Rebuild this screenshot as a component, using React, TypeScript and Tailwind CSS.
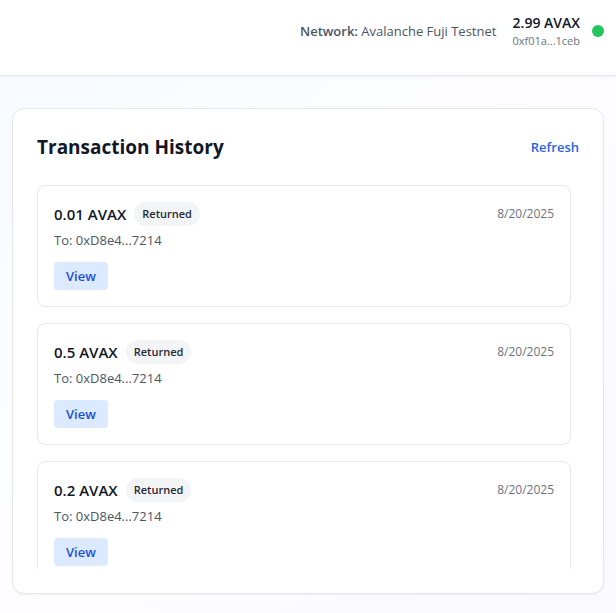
type Transaction = {
  id: number;
  amount: string;
  status: string;
  recipient: string;
  date: string;
};

const transactions: Transaction[] = [
  { id: 1, amount: "0.01 AVAX", status: "Returned", recipient: "0xD8e4...7214", date: "8/20/2025" },
  { id: 2, amount: "0.5 AVAX", status: "Returned", recipient: "0xD8e4...7214", date: "8/20/2025" },
  { id: 3, amount: "0.2 AVAX", status: "Returned", recipient: "0xD8e4...7214", date: "8/20/2025" },
];

function Header() {
  return (
    <header className="flex items-center justify-end gap-4 border-b border-[#e5e7eb] bg-white px-3 pt-[13px] pb-[26px] shadow-xs">
      <p className="text-[13px] leading-5 text-[#4b5563]">
        <span className="font-semibold">Network:</span> Avalanche Fuji Testnet
      </p>
      <div className="flex items-center gap-3">
        <div className="text-right">
          <p className="text-sm font-semibold text-[#111827]">2.99 AVAX</p>
          <p className="text-[11px] leading-4 text-[#6b7280]">0xf01a...1ceb</p>
        </div>
        <span className="size-3 rounded-full bg-[#22c55e]" />
      </div>
    </header>
  );
}

function TransactionCard({ transaction }: { transaction: Transaction }) {
  return (
    <li className="rounded-lg border border-[#e5e7eb] p-4">
      <div className="flex items-center justify-between">
        <div className="flex items-center gap-2">
          <span className="text-[15px] leading-6 font-semibold text-[#111827]">{transaction.amount}</span>
          <span className="rounded-full bg-[#f3f4f6] px-2 py-1 text-[11px] leading-4 font-semibold text-[#1f2937]">
            {transaction.status}
          </span>
        </div>
        <span className="text-xs text-[#6b7280]">{transaction.date}</span>
      </div>
      <p className="mt-1 text-[13px] leading-5 text-[#4b5563]">To: {transaction.recipient}</p>
      <button
        type="button"
        className="mt-3 block rounded bg-[#dbeafe] px-3 py-1 text-[13px] leading-5 font-semibold text-[#1d4ed8] hover:bg-blue-200"
      >
        View
      </button>
    </li>
  );
}

export default function App() {
  return (
    <div className="min-h-screen bg-linear-to-br from-[#f7fbff] via-[#fdfdff] to-[#faf9ff] font-['Open_Sans','Noto_Sans',sans-serif]">
      <Header />
      <main className="px-3 pt-8 pb-4">
        <section className="rounded-xl border border-[#e5e7eb] bg-white p-6 shadow-xs">
          <div className="mb-6 flex items-center justify-between">
            <h2 className="text-[19px] leading-7 font-bold text-[#111827]">Transaction History</h2>
            <button type="button" className="text-[13px] leading-5 font-semibold text-[#2563eb] hover:text-blue-700">
              Refresh
            </button>
          </div>
          <ul className="max-h-96 space-y-4 overflow-y-auto pr-2 [scrollbar-width:none]">
            {transactions.map((transaction) => (
              <TransactionCard key={transaction.id} transaction={transaction} />
            ))}
          </ul>
        </section>
      </main>
    </div>
  );
}
